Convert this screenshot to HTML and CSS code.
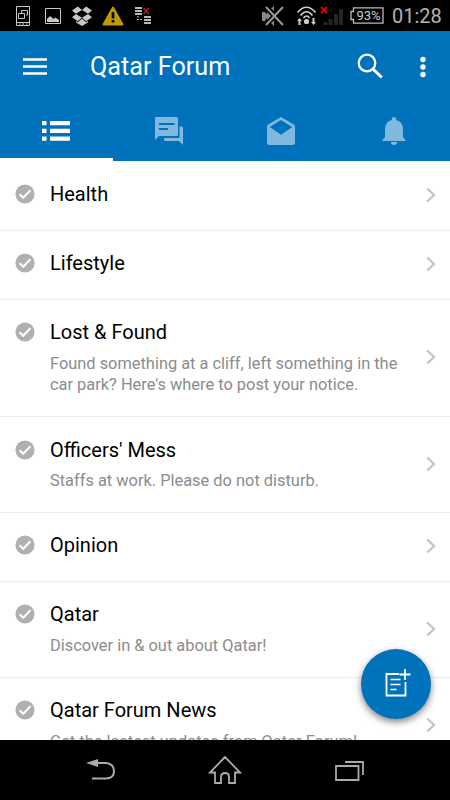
FILE: index.html
```
<!DOCTYPE html>
<html lang="en">

<head>
    <meta charset="UTF-8">
    <meta name="viewport" content="width=device-width, initial-scale=1.0">
    <title>Qatar Forum</title>
    <link rel="stylesheet" href="styles.css">
</head>

<body>
    <!-- shared icons -->
    <svg class="sprite" width="0" height="0">
        <symbol id="check" viewBox="0 0 20 20">
            <circle cx="10" cy="10" r="9.6" fill="#b0b0b0" />
            <path d="M4.6 10.3l3.6 3.5 7.2-7.6" fill="none" stroke="#fff" stroke-width="2" />
        </symbol>
        <symbol id="arrow" viewBox="0 0 10 16">
            <path d="M1.2 1.5L8 8l-6.8 6.5" fill="none" stroke="#c6c6c6" stroke-width="2.4" />
        </symbol>
    </svg>
    <div class="phone">
        <div class="status">
            <div class="notices">
                <svg width="14" height="20" viewBox="0 0 14 20" fill="none" stroke="#c8c8c8">
                    <path d="M.5.5h13v19H.5zM.5 16.5h13M5.5 7V4.500h6v4.500H10M2.500 7.500h6v5h-6z" />
                    <path d="M3 18h1.500M6 18h2M10 18h1.500" />
                </svg>
                <svg width="16" height="16" viewBox="0 0 16 16">
                    <path d="M.5.5h15v15H.5z" fill="none" stroke="#c8c8c8" />
                    <path d="M2 14v-3l3-3 3.500 3 2-1.500L14 12v2z" fill="#c8c8c8" />
                </svg>
                <svg width="20" height="20" viewBox="0 0 20 20" fill="#c8c8c8">
                    <path d="M5.800.5L10 4 4 7.700 0 4.500zM14.200.5L20 4.500 16 7.700 10 4zM0 11.200L4 8l6 3.700-4.200 3.500zM20 11.200L16 8l-6 3.700 4.200 3.500zM10 12.700l4.200 3.500 1.800-1.200v1.400L10 20l-6-3.600V15l1.800 1.200z" />
                </svg>
                <svg width="22" height="20" viewBox="0 0 22 20">
                    <path d="M11 1.500L20.500 18.500h-19z" fill="#c09a00" stroke="#c09a00" stroke-width="2" stroke-linejoin="round" />
                    <path d="M9.700 6h2.600v6.500H9.700zM9.700 14h2.600v2.500H9.700z" fill="#000" />
                </svg>
                <svg width="17" height="18" viewBox="0 0 17 18">
                    <path d="M0 1h7M0 4h7M0 7h7M9 10h7M9 13h7M9 16h7" stroke="#b8b8b8" stroke-width="2" />
                    <path d="M2 10h2M2 12.500h2M5 12.500h2" stroke="#b8b8b8" />
                    <path d="M8.500 1l5.500 6M14 1L8.500 7" stroke="#b52020" stroke-width="1.300" />
                </svg>
            </div>
            <div class="system">
                <svg class="mute" width="23" height="22" viewBox="0 0 23 22">
                    <path d="M0 7h3l3 4-3 5H0zM12 1v5l-3-2.500zM9 18l3-2.500V21zM5 7l4 4-4 4z" fill="#888" />
                    <path d="M4 2l17 18M21 2L4 20" stroke="#999" stroke-width="2" />
                </svg>
                <svg class="wifi" width="19" height="20" viewBox="0 0 19 20">
                    <path d="M.5 6.500Q9.500-4 18.500 6.500M3.500 9.500Q9.500 2 15.500 9.500M6.500 12Q9.500 8 12.500 12" fill="none" stroke="#ccc" stroke-width="1.700" />
                    <circle cx="9.500" cy="15.500" r="2.600" fill="#ccc" />
                    <path d="M0 15l2.500-3L5 15H3.500v4h-2v-4zM14 16h1.500v-4h2v4H19l-2.500 3z" fill="#ccc" />
                </svg>
                <svg class="signal" width="24" height="20" viewBox="0 0 24 20">
                    <path d="M3.500 16h4v3h-4zM8.500 13h4v6h-4zM14 8h4v11h-4zM19 3h4v16h-4z" fill="#252525" />
                    <path d="M1 1l6 6M7 1L1 7" stroke="#d00" stroke-width="2" />
                </svg>
                <div class="battery">
                    <svg width="34" height="17" viewBox="0 0 34 17">
                        <path d="M3.500.8H33v15.400H3.500V12.500H1v-8h2.500z" fill="none" stroke="#bbb" stroke-width="1.300" />
                    </svg>
                    <span>93%</span>
                </div>
                <span class="clock">01:28</span>
            </div>
        </div>

        <header class="header">
            <div class="bar">
                <svg class="menu" width="24" height="17" viewBox="0 0 24 17">
                    <path d="M0 1.500h24M0 8.500h24M0 15.500h24" stroke="#fff" stroke-width="2.400" />
                </svg>
                <h1>Qatar Forum</h1>
                <svg class="search" width="27" height="27" viewBox="0 0 27 27" fill="none" stroke="#fff">
                    <circle cx="10" cy="10" r="8.300" stroke-width="2.300" />
                    <path d="M15.800 15.800l9 8.700" stroke-width="3" />
                </svg>
                <svg class="more" width="6" height="22" viewBox="0 0 6 22" fill="#fff">
                    <circle cx="3" cy="3.500" r="2.700" />
                    <circle cx="3" cy="11" r="2.700" />
                    <circle cx="3" cy="18.500" r="2.700" />
                </svg>
            </div>
            <nav class="tabs">
                <a class="tab active">
                    <svg width="28" height="20" viewBox="0 0 28 20" fill="#fff">
                        <path d="M0 0h4.500v4.300H0zM8 0h20v4.300H8zM0 7.700h4.500V12H0zM8 7.700h20V12H8zM0 15.400h4.500v4.300H0zM8 15.400h20v4.300H8z" />
                    </svg>
                </a>
                <a class="tab">
                    <svg width="28" height="28" viewBox="0 0 28 28" fill="#80b8de">
                        <path fill-rule="evenodd" d="M1 0h20.500q1.500 0 1.500 1.500v16q0 1.500-1.500 1.500H4l-4 4V1q0-1 1-1zM4 6v2h15.500V6zM4 11v2h9v-2z" />
                        <path d="M24.500 9.500h2q1.500 0 1.500 1.500v17l-4-4H10.500Q9 24 9 22.500V21h15.500z" />
                    </svg>
                </a>
                <a class="tab">
                    <svg width="28" height="28" viewBox="0 0 28 28">
                        <path fill="#80b8de" fill-rule="evenodd" d="M14 0l12.800 7.600Q28 8.500 28 10v15.500q0 2.500-2.500 2.500h-23Q0 28 0 25.500V10Q0 8.500 1.200 7.600zM14 3L2.800 10 14 17.700 25.200 10z" />
                    </svg>
                </a>
                <a class="tab">
                    <svg width="24" height="28" viewBox="0 0 24 28" fill="#80b8de">
                        <path d="M9.700 3V2.300a2.300 2.300 0 014.600 0V3Q21 5 21 12v8l2.500 3v1H.5v-1L3 20v-8Q3 5 9.700 3zM8.700 25h6.600q-.5 3-3.300 3t-3.300-3z" />
                    </svg>
                </a>
            </nav>
        </header>

        <main class="list">
            <div class="item first">
                <svg class="check"><use href="#check" /></svg>
                <div class="info">
                    <p class="name">Health</p>
                </div>
                <svg class="arrow"><use href="#arrow" /></svg>
            </div>
            <div class="item">
                <svg class="check"><use href="#check" /></svg>
                <div class="info">
                    <p class="name">Lifestyle</p>
                </div>
                <svg class="arrow"><use href="#arrow" /></svg>
            </div>
            <div class="item">
                <svg class="check"><use href="#check" /></svg>
                <div class="info">
                    <p class="name">Lost &amp; Found</p>
                    <p class="text">Found something at a cliff, left something in the<br>car park? Here's where to post your notice.</p>
                </div>
                <svg class="arrow"><use href="#arrow" /></svg>
            </div>
            <div class="item">
                <svg class="check"><use href="#check" /></svg>
                <div class="info">
                    <p class="name">Officers' Mess</p>
                    <p class="text">Staffs at work. Please do not disturb.</p>
                </div>
                <svg class="arrow"><use href="#arrow" /></svg>
            </div>
            <div class="item">
                <svg class="check"><use href="#check" /></svg>
                <div class="info">
                    <p class="name">Opinion</p>
                </div>
                <svg class="arrow"><use href="#arrow" /></svg>
            </div>
            <div class="item">
                <svg class="check"><use href="#check" /></svg>
                <div class="info">
                    <p class="name">Qatar</p>
                    <p class="text">Discover in &amp; out about Qatar!</p>
                </div>
                <svg class="arrow"><use href="#arrow" /></svg>
            </div>
            <div class="item">
                <svg class="check"><use href="#check" /></svg>
                <div class="info">
                    <p class="name">Qatar Forum News</p>
                    <p class="text">Get the lastest updates from Qatar Forum!</p>
                </div>
                <svg class="arrow"><use href="#arrow" /></svg>
            </div>
            <button class="compose">
                <svg width="26" height="28" viewBox="0 0 26 28" fill="none" stroke="#fff">
                    <path d="M14 5H1.500v21.500h19V13" stroke-width="1.800" />
                    <path d="M5.500 10.500h10M5.500 15.500h10M5.500 20.500h6" stroke-width="1.500" />
                    <path d="M20 0v11M14.500 5.500h11" stroke-width="1.800" />
                </svg>
            </button>
        </main>

        <footer class="keys">
            <svg width="30" height="22" viewBox="0 0 30 22">
                <path d="M8 4h12q8 1 8 8 0 7.500-8 7.500H6" fill="none" stroke="#aaa" stroke-width="2" />
                <path d="M0 4l12-4v8z" fill="#aaa" />
            </svg>
            <svg width="34" height="30" viewBox="0 0 34 30" fill="none" stroke="#aaa" stroke-width="1.800">
                <path d="M17 2L2 17.500h5V28h6v-6q0-4 4-4t4 4v6h6V17.500h5z" />
            </svg>
            <svg width="30" height="21" viewBox="0 0 30 21" fill="none" stroke="#aaa" stroke-width="1.800">
                <path d="M2 6h22.500v14H2zM11 2h18v13" />
            </svg>
        </footer>
    </div>
</body>

</html>
```
FILE: styles.css
```
* {
    margin: 0;
    padding: 0;
    box-sizing: border-box;
}

body {
    background: #fff;
    font-family: Roboto, "Liberation Sans", sans-serif;
}

svg {
    display: block;
    flex-shrink: 0;
}

.sprite {
    position: absolute;
}

.phone {
    width: 450px;
    height: 800px;
    display: flex;
    flex-direction: column;
    overflow: hidden;
}

/* 状态栏 */
.status {
    height: 31px;
    background: #000;
    display: flex;
    justify-content: space-between;
    padding: 0 7px 0 16px;
}

.notices,
.system {
    display: flex;
    align-items: center;
}

.notices {
    gap: 13px;
}

.notices svg:nth-child(2) {
    margin: 0 -2px 0 2px;
}

.notices svg:nth-child(4) {
    margin: 0 -2px 0 -3px;
}

.mute {
    margin-right: 12px;
}

.wifi {
    margin-right: 4px;
}

.signal {
    margin-right: 6px;
}

.battery {
    display: grid;
    align-items: center;
    margin-right: 8px;
}

.battery svg,
.battery span {
    grid-area: 1 / 1;
}

.battery span {
    color: #ccc;
    font-size: 13px;
    text-align: center;
    padding-left: 3px;
}

.clock {
    color: #b4b4b4;
    font-size: 20px;
    width: 51px;
    padding-top: 1px;
    white-space: nowrap;
}

/* 头部 */
.header {
    height: 130px;
    background: #0072bc;
    color: #fff;
}

.bar {
    height: 71px;
    display: flex;
    align-items: center;
    padding: 0 24px 0 23px;
}

.bar h1 {
    flex: 1;
    margin-left: 43px;
    font-size: 25.2px;
    font-weight: 400;
}

.search {
    margin-right: 36px;
}

.tabs {
    height: 59px;
    display: grid;
    grid-template-columns: repeat(4, 1fr);
}

.tab {
    display: flex;
    justify-content: center;
    align-items: center;
    padding-top: 2px;
    border-bottom: 3px solid transparent;
}

.tab.active {
    border-color: #fff;
}

/* 列表 */
.list {
    position: relative;
    flex: 1;
    overflow: hidden;
}

.item {
    display: flex;
    padding: 19.3px 14.5px 22.7px 15px;
    border-bottom: 1px solid #eee;
}

.item.first {
    padding: 20px 14.5px 23px 15px;
}

.check {
    width: 20px;
    height: 20px;
    margin: 3px 15px 0 0;
}

.info {
    flex: 1;
}

.name {
    color: #000;
    font-size: 20px;
    line-height: 26px;
}

.text {
    color: #8c8c8c;
    font-size: 16.4px;
    line-height: 21.5px;
    padding-top: 7.5px;
    margin-bottom: -2.2px;
    white-space: nowrap;
}

.arrow {
    width: 10px;
    height: 16px;
    margin-top: 2px;
    align-self: center;
}

.compose {
    position: absolute;
    right: 19px;
    bottom: 21px;
    width: 70px;
    height: 70px;
    padding-left: 4px;
    padding-bottom: 3px;
    border: none;
    border-radius: 50%;
    background: #0072bc;
    box-shadow: 0 3px 7px rgba(0, 0, 0, .5);
    display: flex;
    justify-content: center;
    align-items: center;
}

/* 底部按键 */
.keys {
    height: 60px;
    background: #000;
    display: flex;
    justify-content: space-between;
    align-items: center;
    padding: 0 86px;
}
```
